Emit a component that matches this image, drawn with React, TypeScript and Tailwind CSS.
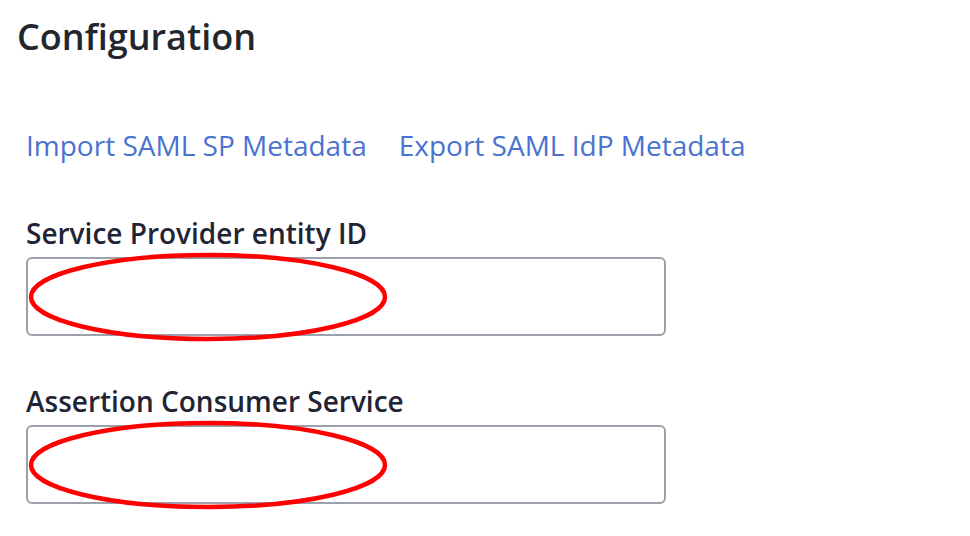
import React from "react";

function Field({ label }: { label: string }) {
  return (
    <div className="flex flex-col">
      <label className="text-[28px] leading-[38px] font-semibold text-[#1f2535]">{label}</label>
      <div className="relative mt-[5px] w-[640px] h-[79px] rounded-[6px] border-2 border-[#9aa1ab] bg-white">
        <svg className="absolute left-0 top-[-9px] overflow-visible" width="370" height="96" viewBox="0 0 370 96">
          <ellipse cx="180" cy="47" rx="177" ry="42" fill="none" stroke="#ff0000" strokeWidth="4.5" />
        </svg>
      </div>
    </div>
  );
}

export default function App() {
  return (
    <div className="w-[970px] h-[536px] bg-white overflow-hidden" style={{ fontFamily: '"Open Sans", sans-serif' }}>
      <div className="pl-[17px] pt-[13px]">
        <h1 className="text-[36px] leading-[48px] font-semibold text-[#23272d]">Configuration</h1>
      </div>
      <div className="pl-[26px] mt-[65px] flex gap-[32px] text-[28px] leading-[38px] text-[#4a72d0]">
        <a href="#">Import SAML SP Metadata</a>
        <a href="#">Export SAML IdP Metadata</a>
      </div>
      <div className="pl-[26px] mt-[50px] flex flex-col gap-[46px]">
        <Field label="Service Provider entity ID" />
        <Field label="Assertion Consumer Service" />
      </div>
    </div>
  );
}
